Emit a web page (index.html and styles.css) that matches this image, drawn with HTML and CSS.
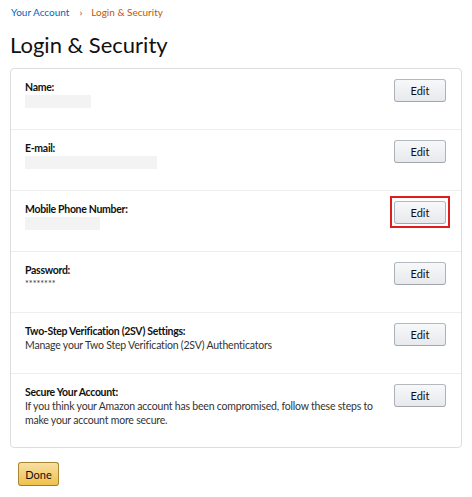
FILE: index.html
```html
<!DOCTYPE html>
<html lang="en">
<head>
<meta charset="utf-8">
<title>Login &amp; Security</title>
<link rel="stylesheet" href="styles.css">
</head>
<body>
<div class="page">
  <nav class="crumbs">
    <a class="crumb-link" href="#">Your Account</a>
    <span class="crumb-sep">›</span>
    <span class="crumb-current">Login &amp; Security</span>
  </nav>
  <h1 class="title">Login &amp; Security</h1>
  <div class="card">
    <div class="row">
      <div class="info">
        <div class="label">Name:</div>
        <div class="mask mask-name"></div>
      </div>
      <button class="edit">Edit</button>
    </div>
    <div class="row">
      <div class="info">
        <div class="label">E-mail:</div>
        <div class="mask mask-email"></div>
      </div>
      <button class="edit">Edit</button>
    </div>
    <div class="row">
      <div class="info">
        <div class="label">Mobile Phone Number:</div>
        <div class="mask mask-phone"></div>
      </div>
      <div class="highlight"><button class="edit">Edit</button></div>
    </div>
    <div class="row">
      <div class="info">
        <div class="label">Password:</div>
        <div class="value stars">********</div>
      </div>
      <button class="edit">Edit</button>
    </div>
    <div class="row">
      <div class="info">
        <div class="label">Two-Step Verification (2SV) Settings:</div>
        <div class="value">Manage your Two Step Verification (2SV) Authenticators</div>
      </div>
      <button class="edit">Edit</button>
    </div>
    <div class="row">
      <div class="info">
        <div class="label">Secure Your Account:</div>
        <div class="value">If you think your Amazon account has been compromised, follow these steps to make your account more secure.</div>
      </div>
      <button class="edit">Edit</button>
    </div>
  </div>
  <button class="done">Done</button>
</div>
</body>
</html>
```
FILE: styles.css
```css
* { box-sizing: border-box; }
body {
  margin: 0;
  background: #fff;
  font-family: Lato, "Noto Sans", sans-serif;
  color: #111;
  font-size: 11px;
  line-height: 14px;
}
.page {
  padding: 5px 10px 0 10px;
  width: 472px;
}
.crumbs {
  display: flex;
  padding-left: 1px;
  height: 14px;
  font-size: 10px;
  line-height: 14px;
}
.crumb-link { color: #0066c0; text-decoration: none; }
.crumb-sep { color: #555; margin: 0 9px 0 10px; }
.crumb-current { color: #c45500; }
.title {
  margin: 11px 0 0 0;
  font-size: 22px;
  line-height: 30px;
  font-weight: 400;
  color: #111;
  height: 38px;
}
.card {
  width: 452px;
  border: 1px solid #ddd;
  border-radius: 4px;
}
.row {
  display: flex;
  justify-content: space-between;
  align-items: flex-start;
  padding: 10px 15px 20px 14px;
  border-top: 1px solid #eee;
}
.row:first-child { border-top: none; }
.info { flex: 1; padding-top: 1px; min-height: 30px; }
.label {
  font-weight: 700;
  color: #111;
  font-size: 10.5px;
  letter-spacing: -0.3px;
}
.value {
  color: #333;
  padding-right: 14px;
  font-size: 10.5px;
  letter-spacing: -0.2px;
}
.stars { font-size: 9px; letter-spacing: 0; }
.mask {
  background: #f3f3f3;
  height: 13px;
  margin: 1px 0 1px 0;
}
.mask-name { width: 66px; }
.mask-email { width: 132px; }
.mask-phone { width: 75px; }
.edit {
  display: block;
  width: 52px;
  height: 23px;
  padding: 0;
  font-family: inherit;
  font-size: 11px;
  color: #111;
  background: linear-gradient(#f7f8fa, #e7e9ec);
  border: 1px solid #adb1b8;
  border-top-color: #b5b8bd;
  border-bottom-color: #a2a6ac;
  border-radius: 3px;
  flex: none;
}
.highlight {
  border: 2px solid #dd1c1c;
  padding: 3px 2px 2px 2px;
  margin: -5px -4px -5px 0;
}
.done {
  display: block;
  margin: 14px 0 0 8px;
  width: 41px;
  height: 24px;
  padding: 0;
  font-family: inherit;
  font-size: 11px;
  color: #111;
  background: linear-gradient(#f7dfa5, #f0c14b);
  border: 1px solid #a88734;
  border-bottom-color: #9c7e31;
  border-radius: 3px;
}
```
